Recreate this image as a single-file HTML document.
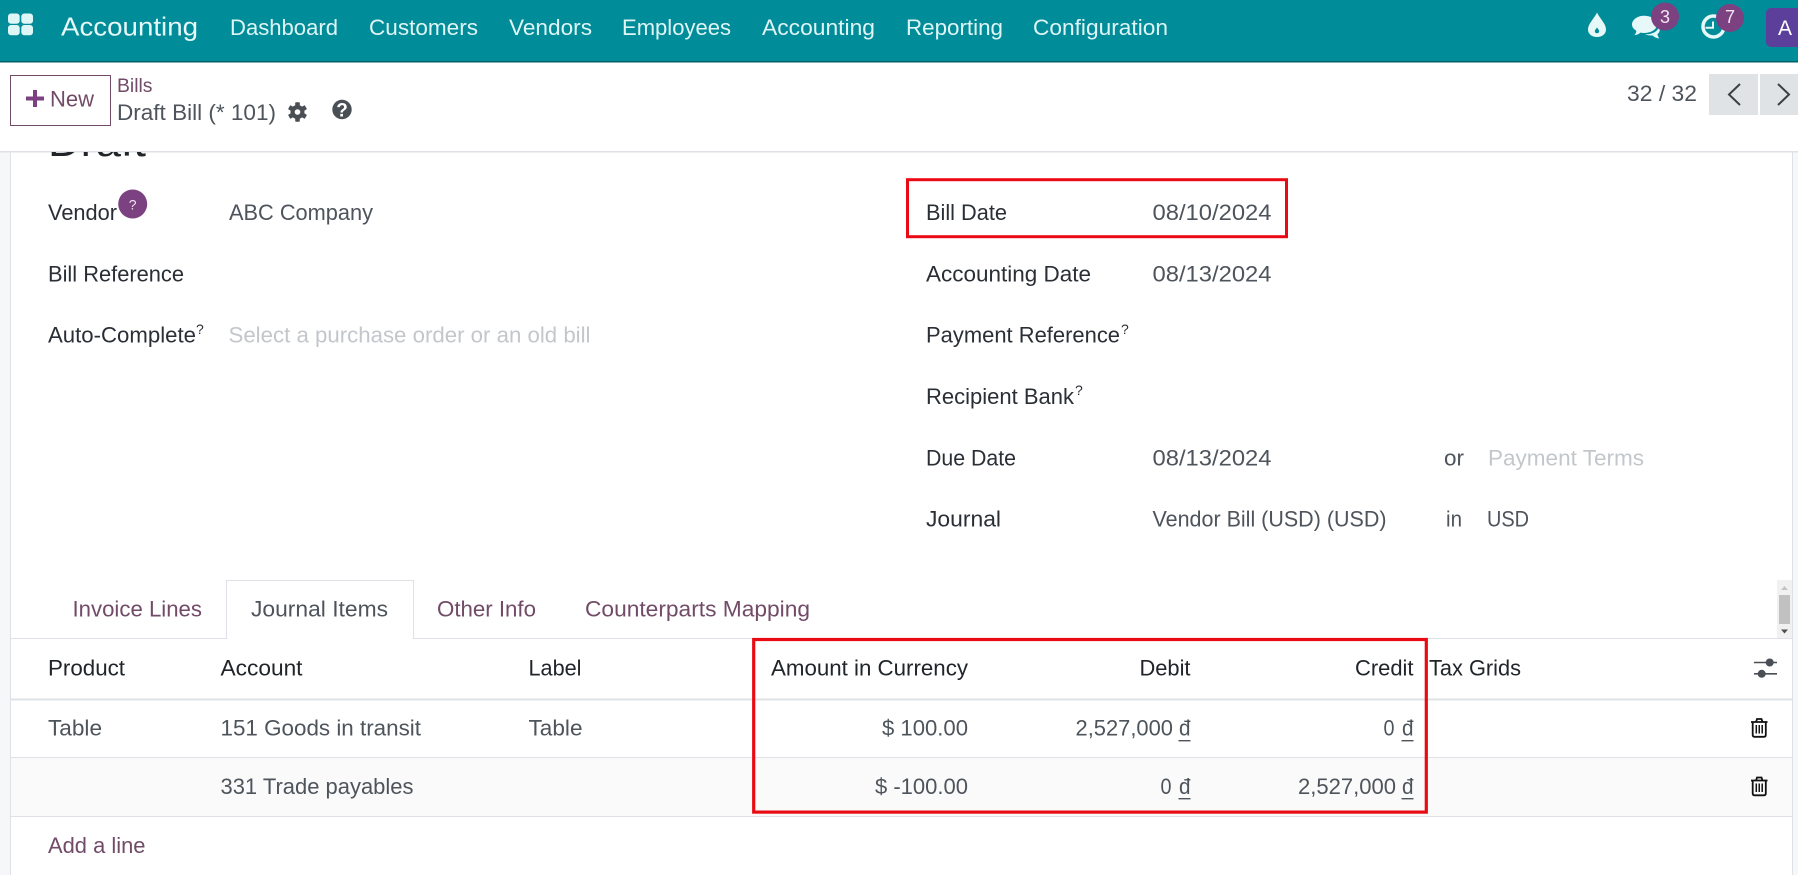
<!DOCTYPE html>
<html><head><meta charset="utf-8"><title>Draft Bill</title>
<style>
html,body{margin:0;padding:0;width:1798px;height:875px;overflow:hidden;background:#fff}
svg{display:block}
text{font-family:"Liberation Sans",sans-serif;font-size:22px}
.nav{fill:#dff5f5;font-size:22.5px}
.lab{fill:#2a2f36}
.val{fill:#4e545b}
.ph{fill:#c3c7cb}
.lnk{fill:#714b67}
.sup{fill:#2a2f36;font-size:14px}
</style></head><body>
<svg width="1798" height="875" viewBox="0 0 1798 875" xmlns="http://www.w3.org/2000/svg">
<defs><clipPath id="cd"><rect x="0" y="152" width="400" height="20"/></clipPath></defs>
<rect width="1798" height="875" fill="#fff"/>
<!-- gutters -->
<rect x="0" y="152" width="10" height="723" fill="#f5f7f9"/>
<rect x="10" y="152" width="1" height="723" fill="#dee2e6"/>
<rect x="1792" y="152" width="6" height="723" fill="#f5f7f9"/>
<rect x="1792" y="152" width="1" height="723" fill="#dee2e6"/>
<!-- navbar -->
<rect width="1798" height="61" fill="#018c99"/>
<rect y="61" width="1798" height="1.5" fill="#01616a"/>
<g fill="#dff6f6">
<rect x="8" y="13.5" width="11.7" height="10.2" rx="3"/><rect x="21.3" y="13.5" width="11.7" height="10.2" rx="3"/>
<rect x="8" y="25" width="11.7" height="10.2" rx="3"/><rect x="21.3" y="25" width="11.7" height="10.2" rx="3"/>
</g>
<text x="61" y="35.5" fill="#e6f8f8" style="font-size:26px" textLength="137" lengthAdjust="spacingAndGlyphs">Accounting</text>
<text class="nav" x="230" y="35" textLength="108" lengthAdjust="spacingAndGlyphs">Dashboard</text>
<text class="nav" x="369" y="35" textLength="109" lengthAdjust="spacingAndGlyphs">Customers</text>
<text class="nav" x="509" y="35" textLength="83" lengthAdjust="spacingAndGlyphs">Vendors</text>
<text class="nav" x="622" y="35" textLength="109" lengthAdjust="spacingAndGlyphs">Employees</text>
<text class="nav" x="762" y="35" textLength="113" lengthAdjust="spacingAndGlyphs">Accounting</text>
<text class="nav" x="906" y="35" textLength="97" lengthAdjust="spacingAndGlyphs">Reporting</text>
<text class="nav" x="1033" y="35" textLength="135" lengthAdjust="spacingAndGlyphs">Configuration</text>
<!-- drop -->
<path d="M1597 12.5 C1600 19 1606 23.5 1606 29.5 C1606 34 1602 37 1597 37 C1592 37 1588 34 1588 29.5 C1588 23.5 1594 19 1597 12.5Z" fill="#e6f8f8"/>
<path d="M1597 27.5 C1598 29 1599.2 30 1599.2 31.2 C1599.2 32.4 1598.2 33.2 1597 33.2 C1595.8 33.2 1594.8 32.4 1594.8 31.2 C1594.8 30 1596 29 1597 27.5Z" fill="#018c99"/>
<!-- chat -->
<path d="M1644 15.7 C1652 15.7 1657 20 1657 24.5 C1657 29.5 1651 33 1644 33 C1642.5 33 1641.5 32.9 1640.5 32.6 C1638.5 34.3 1636.5 35 1634.3 35 C1635.7 33.7 1636.3 32.3 1636.3 30.7 C1633.5 29 1632 27 1632 24.5 C1632 20 1637 15.7 1644 15.7Z" fill="#e6f8f8"/>
<path d="M1658.5 27 C1660 29 1660.5 32 1657.5 34 C1657.5 35.5 1658.5 37.5 1659.5 38.5 C1656.5 38.2 1654 37 1652.5 35.5 C1650 35.7 1647 35.3 1645 34.3 C1652 34.5 1658 31.5 1658.5 27Z" fill="#e6f8f8"/>
<circle cx="1665" cy="16.5" r="14" fill="#7c4180"/>
<text x="1665" y="23" text-anchor="middle" fill="#f0e6f0" style="font-size:18px">3</text>
<!-- clock -->
<circle cx="1713.5" cy="26.5" r="10.5" fill="none" stroke="#e6f8f8" stroke-width="3.5"/>
<path d="M1713 21.5 V27.7 H1705.5" fill="none" stroke="#e6f8f8" stroke-width="2"/>
<circle cx="1730" cy="18" r="14" fill="#7c4180"/>
<text x="1730" y="23" text-anchor="middle" fill="#f0e6f0" style="font-size:18px">7</text>
<!-- avatar -->
<rect x="1766" y="8" width="40" height="39" rx="5" fill="#5b3f9a"/>
<text x="1778" y="35" fill="#fff" style="font-size:21px">A</text>
<!-- control panel -->
<rect x="10.5" y="75.5" width="100" height="50" fill="#fff" stroke="#714b67"/>
<path d="M33 90 h4 v6.5 h7 v4 h-7 v6.5 h-4 v-6.5 h-7 v-4 h7z" fill="#7c4180"/>
<text x="50" y="106.5" class="lnk" textLength="44" lengthAdjust="spacingAndGlyphs">New</text>
<text x="117" y="92" class="lnk" style="font-size:19.5px" textLength="35.5" lengthAdjust="spacingAndGlyphs">Bills</text>
<text x="117" y="120" class="val" textLength="159" lengthAdjust="spacingAndGlyphs">Draft Bill (* 101)</text>
<!-- gear -->
<g fill="#4a4f55">
<circle cx="297.5" cy="112" r="7"/>
<rect x="295.2" y="102.3" width="4.6" height="19.4" rx="0.8"/>
<rect x="295.2" y="102.3" width="4.6" height="19.4" rx="0.8" transform="rotate(60 297.5 112)"/>
<rect x="295.2" y="102.3" width="4.6" height="19.4" rx="0.8" transform="rotate(120 297.5 112)"/>
</g>
<circle cx="297.5" cy="112" r="2.8" fill="#fff"/>
<!-- help -->
<circle cx="342" cy="109.5" r="9.7" fill="#4a4f55"/>
<text x="342" y="116.3" text-anchor="middle" fill="#fff" style="font-size:19px;font-weight:bold">?</text>
<!-- pager -->
<text x="1627" y="101" class="val" textLength="70" lengthAdjust="spacingAndGlyphs">32 / 32</text>
<rect x="1709" y="74" width="49" height="41" fill="#e0e3e6"/>
<rect x="1760" y="74" width="38" height="41" fill="#e0e3e6"/>
<path d="M1740 84 L1729 94.5 L1740 105" fill="none" stroke="#3c4046" stroke-width="2"/>
<path d="M1778 84 L1789 94.5 L1778 105" fill="none" stroke="#3c4046" stroke-width="2"/>
<rect x="0" y="151" width="1798" height="1.5" fill="#dee2e6"/>
<!-- Draft clipped -->
<text x="48" y="156" clip-path="url(#cd)" fill="#212529" style="font-size:42px" textLength="98" lengthAdjust="spacingAndGlyphs">Draft</text>
<!-- left form -->
<text x="48" y="220" class="lab" textLength="69" lengthAdjust="spacingAndGlyphs">Vendor</text>
<circle cx="132.7" cy="204" r="14.5" fill="#7c4180"/>
<text x="132.7" y="209.5" text-anchor="middle" fill="#f0e6f0" style="font-size:14px">?</text>
<text x="229" y="220" class="val" textLength="144" lengthAdjust="spacingAndGlyphs">ABC Company</text>
<text x="48" y="281.3" class="lab" textLength="136" lengthAdjust="spacingAndGlyphs">Bill Reference</text>
<text x="48" y="342.6" class="lab" textLength="148" lengthAdjust="spacingAndGlyphs">Auto-Complete</text>
<text x="196" y="334" class="sup">?</text>
<text x="228.5" y="342.6" class="ph" textLength="362" lengthAdjust="spacingAndGlyphs">Select a purchase order or an old bill</text>
<!-- right form -->
<text x="926" y="220" class="lab" textLength="81" lengthAdjust="spacingAndGlyphs">Bill Date</text>
<text x="1152.5" y="220" class="val" textLength="119" lengthAdjust="spacingAndGlyphs">08/10/2024</text>
<text x="926" y="281.3" class="lab" textLength="165" lengthAdjust="spacingAndGlyphs">Accounting Date</text>
<text x="1152.5" y="281.3" class="val" textLength="119" lengthAdjust="spacingAndGlyphs">08/13/2024</text>
<text x="926" y="342.6" class="lab" textLength="194" lengthAdjust="spacingAndGlyphs">Payment Reference</text>
<text x="1121" y="334" class="sup">?</text>
<text x="926" y="404" class="lab" textLength="148" lengthAdjust="spacingAndGlyphs">Recipient Bank</text>
<text x="1075" y="395" class="sup">?</text>
<text x="926" y="465.3" class="lab" textLength="90" lengthAdjust="spacingAndGlyphs">Due Date</text>
<text x="1152.5" y="465.3" class="val" textLength="119" lengthAdjust="spacingAndGlyphs">08/13/2024</text>
<text x="1444" y="465.3" class="val" textLength="20" lengthAdjust="spacingAndGlyphs">or</text>
<text x="1488" y="465.3" class="ph" textLength="156" lengthAdjust="spacingAndGlyphs">Payment Terms</text>
<text x="926" y="526.6" class="lab" textLength="75" lengthAdjust="spacingAndGlyphs">Journal</text>
<text x="1152.5" y="526.6" class="val" textLength="234" lengthAdjust="spacingAndGlyphs">Vendor Bill (USD) (USD)</text>
<text x="1446" y="526.6" class="val" textLength="16" lengthAdjust="spacingAndGlyphs">in</text>
<text x="1487" y="526.6" class="val" textLength="42" lengthAdjust="spacingAndGlyphs">USD</text>
<!-- tabs -->
<rect x="11" y="638" width="1781" height="1" fill="#dee2e6"/>
<path d="M226.5 638.5 V580.5 H413.5 V638.5" fill="#fff" stroke="#dee2e6"/>
<rect x="227" y="637" width="186" height="3" fill="#fff"/>
<text x="72.5" y="616.7" class="lnk" textLength="129.5" lengthAdjust="spacingAndGlyphs">Invoice Lines</text>
<text x="251" y="616.7" class="val" textLength="137" lengthAdjust="spacingAndGlyphs">Journal Items</text>
<text x="437" y="616.7" class="lnk" textLength="99" lengthAdjust="spacingAndGlyphs">Other Info</text>
<text x="585" y="616.7" class="lnk" textLength="225" lengthAdjust="spacingAndGlyphs">Counterparts Mapping</text>
<!-- scrollbar -->
<rect x="1777" y="580" width="15" height="58" fill="#f1f1f1"/>
<rect x="1779" y="595" width="11" height="29" fill="#c1c1c1"/>
<path d="M1781 590 L1784.5 586 L1788 590Z" fill="#c4c4c4"/>
<path d="M1781 629.5 L1784.5 633.5 L1788 629.5Z" fill="#505050"/>
<!-- table -->
<rect x="11" y="758" width="1781" height="58" fill="#fafafa"/>
<rect x="11" y="698.5" width="1781" height="2" fill="#dfe2e5"/>
<rect x="11" y="757" width="1781" height="1" fill="#dee2e6"/>
<rect x="11" y="816" width="1781" height="1" fill="#dee2e6"/>
<text x="48" y="675.7" fill="#212529" textLength="77" lengthAdjust="spacingAndGlyphs">Product</text>
<text x="220.5" y="675.7" fill="#212529" textLength="82" lengthAdjust="spacingAndGlyphs">Account</text>
<text x="528.5" y="675.7" fill="#212529" textLength="53" lengthAdjust="spacingAndGlyphs">Label</text>
<text x="771" y="675.7" fill="#212529" textLength="197" lengthAdjust="spacingAndGlyphs">Amount in Currency</text>
<text x="1139.5" y="675.7" fill="#212529" textLength="51" lengthAdjust="spacingAndGlyphs">Debit</text>
<text x="1355" y="675.7" fill="#212529" textLength="58.5" lengthAdjust="spacingAndGlyphs">Credit</text>
<text x="1429" y="675.7" fill="#212529" textLength="92" lengthAdjust="spacingAndGlyphs">Tax Grids</text>
<!-- sliders -->
<g stroke="#4a4f55" stroke-width="1.6"><path d="M1754 662.5 H1777"/><path d="M1754 673.8 H1777"/></g>
<circle cx="1769.7" cy="662.5" r="4" fill="#4a4f55"/><circle cx="1761.7" cy="673.8" r="4" fill="#4a4f55"/>
<text x="48" y="735.7" class="val" textLength="54" lengthAdjust="spacingAndGlyphs">Table</text>
<text x="220.5" y="735.7" class="val" textLength="200.5" lengthAdjust="spacingAndGlyphs">151 Goods in transit</text>
<text x="528.5" y="735.7" class="val" textLength="54" lengthAdjust="spacingAndGlyphs">Table</text>
<text x="882" y="735.7" class="val" textLength="86" lengthAdjust="spacingAndGlyphs">$ 100.00</text>
<text x="1075.5" y="735.7" class="val" textLength="97.5" lengthAdjust="spacingAndGlyphs">2,527,000</text>
<text x="1179" y="735.7" class="val" textLength="11.5" lengthAdjust="spacingAndGlyphs">đ</text><rect x="1178.5" y="740" width="12" height="1.4" fill="#4e545b"/>
<text x="1383.5" y="735.7" class="val" textLength="11" lengthAdjust="spacingAndGlyphs">0</text>
<text x="1402" y="735.7" class="val" textLength="11.5" lengthAdjust="spacingAndGlyphs">đ</text><rect x="1401.5" y="740" width="12" height="1.4" fill="#4e545b"/>
<text x="220.5" y="794" class="val" textLength="193" lengthAdjust="spacingAndGlyphs">331 Trade payables</text>
<text x="875" y="794" class="val" textLength="93" lengthAdjust="spacingAndGlyphs">$ -100.00</text>
<text x="1160.5" y="794" class="val" textLength="11" lengthAdjust="spacingAndGlyphs">0</text>
<text x="1179" y="794" class="val" textLength="11.5" lengthAdjust="spacingAndGlyphs">đ</text><rect x="1178.5" y="798" width="12" height="1.4" fill="#4e545b"/>
<text x="1298" y="794" class="val" textLength="98" lengthAdjust="spacingAndGlyphs">2,527,000</text>
<text x="1402" y="794" class="val" textLength="11.5" lengthAdjust="spacingAndGlyphs">đ</text><rect x="1401.5" y="798" width="12" height="1.4" fill="#4e545b"/>
<!-- trash -->
<g fill="none" stroke="#111" stroke-width="1.8">
<path d="M1751 722 H1767.5 M1756 722 L1757 719 H1761.5 L1762.5 722"/><path d="M1752.7 722 V735 Q1752.7 736.8 1754.5 736.8 H1764 Q1765.8 736.8 1765.8 735 V722"/><path d="M1756.3 725 V733.5 M1759.25 725 V733.5 M1762.2 725 V733.5" stroke-width="1.5"/>
</g>
<g fill="none" stroke="#111" stroke-width="1.8" transform="translate(0,58.5)">
<path d="M1751 722 H1767.5 M1756 722 L1757 719 H1761.5 L1762.5 722"/><path d="M1752.7 722 V735 Q1752.7 736.8 1754.5 736.8 H1764 Q1765.8 736.8 1765.8 735 V722"/><path d="M1756.3 725 V733.5 M1759.25 725 V733.5 M1762.2 725 V733.5" stroke-width="1.5"/>
</g>
<text x="48" y="853" class="lnk" textLength="97.5" lengthAdjust="spacingAndGlyphs">Add a line</text>
<!-- red boxes -->
<rect x="907.5" y="179.7" width="379" height="57" fill="none" stroke="#e90a14" stroke-width="3"/>
<rect x="753.7" y="639.5" width="672.6" height="172.6" fill="none" stroke="#e90a14" stroke-width="3.2"/>
</svg>
</body></html>
